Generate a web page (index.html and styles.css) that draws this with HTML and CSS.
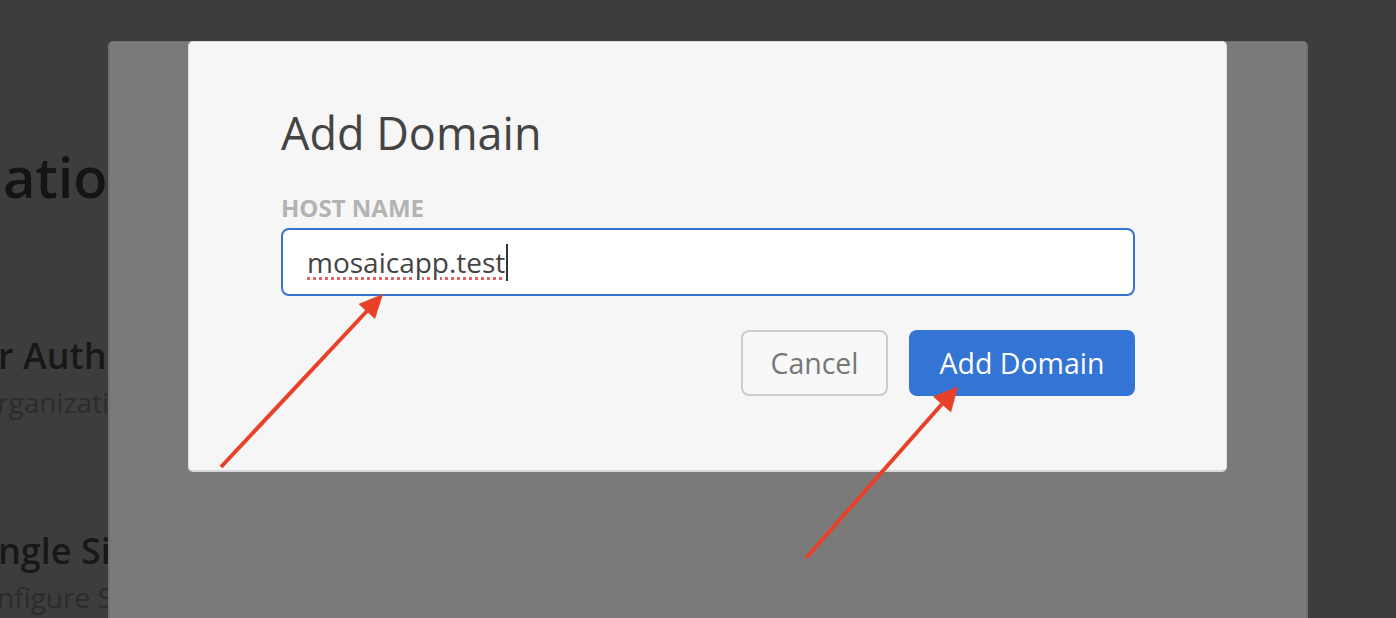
FILE: index.html
```html
<!DOCTYPE html>
<html lang="en">
<head>
<meta charset="utf-8">
<title>Add Domain</title>
<link rel="stylesheet" href="styles.css">
</head>
<body>
  <main class="page">
    <h1 class="page-title">ation Settings</h1>
    <section class="setting setting-first">
      <h2 class="setting-title">r Authentication</h2>
      <p class="setting-desc">rganization members</p>
    </section>
    <section class="setting setting-second">
      <h2 class="setting-title">ngle Sign-On</h2>
      <p class="setting-desc">nfigure SAML</p>
    </section>
  </main>

  <div class="panel"></div>

  <div class="modal" role="dialog">
    <h2 class="modal-title">Add Domain</h2>
    <label class="field-label">HOST NAME</label>
    <div class="field-input"><span class="typed">mosaicapp.test</span><span class="caret"></span></div>
    <div class="actions">
      <button class="btn btn-cancel">Cancel</button>
      <button class="btn btn-primary">Add Domain</button>
    </div>
  </div>

  <svg class="annotations" width="1396" height="618" viewBox="0 0 1396 618">
    <line x1="221" y1="467" x2="367" y2="311" stroke="#e8412a" stroke-width="4"/>
    <polygon points="383,294 375,319 358.5,304" fill="#e8412a"/>
    <line x1="806" y1="558" x2="942" y2="404" stroke="#e8412a" stroke-width="4"/>
    <polygon points="958,386.5 951,412.5 933,396.5" fill="#e8412a"/>
  </svg>
</body>
</html>
```

FILE: styles.css
```css
* { box-sizing: border-box; }

html, body {
  margin: 0;
  height: 618px;
  overflow: hidden;
}

body {
  background: #3d3d3d;
  font-family: "Open Sans", "Noto Sans", sans-serif;
  position: relative;
}

.page {
  display: flex;
  flex-direction: column;
  padding-top: 148px;
  white-space: nowrap;
}

.page-title {
  margin: 0 0 0 3px;
  font-size: 56px;
  line-height: 1;
  font-weight: 600;
  color: #141414;
}

.setting { display: flex; flex-direction: column; }
.setting-first { margin-top: 134px; }
.setting-second { margin-top: 117px; }

.setting-title {
  margin: 0 0 0 -2px;
  font-size: 36px;
  line-height: 1;
  font-weight: 600;
  color: #181818;
}

.setting-desc {
  margin: 14px 0 0 -3px;
  font-size: 28px;
  line-height: 1;
  font-weight: 400;
  color: #2c2c2c;
}

.panel {
  position: absolute;
  left: 108px;
  top: 41px;
  width: 1200px;
  bottom: 0;
  background: #7a7a7a;
  border-left: 2px solid #717171;
  border-right: 2px solid #717171;
  border-top: 1px solid #727272;
  border-radius: 5px 5px 0 0;
}

.modal {
  position: absolute;
  left: 188px;
  top: 41px;
  width: 1039px;
  height: 431px;
  background: #f6f6f6;
  border: 1px solid #dedede;
  border-bottom: 2px solid #d6d6d6;
  border-radius: 5px;
  padding: 68px 91px 0 92px;
  display: flex;
  flex-direction: column;
}

.modal-title {
  margin: 0;
  font-size: 45px;
  line-height: 1;
  font-weight: 400;
  color: #444444;
}

.field-label {
  margin-top: 41px;
  font-size: 24px;
  line-height: 1;
  font-weight: 700;
  color: #b3b3b3;
}

.field-input {
  margin-top: 8px;
  height: 68px;
  background: #ffffff;
  border: 2px solid #3574d3;
  border-radius: 8px;
  padding-left: 24px;
  display: flex;
  align-items: center;
}

.typed {
  font-size: 28px;
  color: #444444;
  text-decoration: underline dotted #e86060;
  text-decoration-thickness: 3px;
  text-underline-offset: 4px;
}

.caret {
  width: 2px;
  height: 37px;
  background: #333;
  margin-left: 1px;
}

.actions {
  margin-top: 34px;
  display: flex;
  justify-content: flex-end;
  gap: 21px;
}

.btn {
  height: 66px;
  border-radius: 8px;
  font-family: "Open Sans", "Noto Sans", sans-serif;
  font-size: 28.5px;
  font-weight: 400;
  padding: 0;
  cursor: pointer;
}

.btn-cancel {
  width: 147px;
  background: #f8f8f8;
  border: 2px solid #cccccc;
  color: #777777;
}

.btn-primary {
  width: 226px;
  background: #3474d4;
  border: none;
  color: #ffffff;
}

.annotations {
  position: absolute;
  left: 0;
  top: 0;
  pointer-events: none;
}
```
